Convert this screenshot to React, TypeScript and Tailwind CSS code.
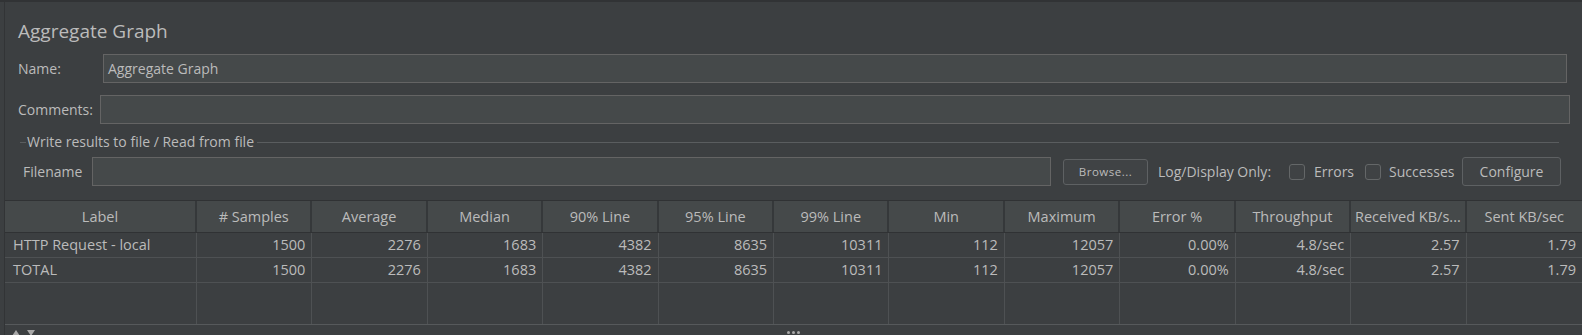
import React from 'react'

const columns = [
  'Label',
  '# Samples',
  'Average',
  'Median',
  '90% Line',
  '95% Line',
  '99% Line',
  'Min',
  'Maximum',
  'Error %',
  'Throughput',
  'Received KB/s...',
  'Sent KB/sec',
]

const rows = [
  ['HTTP Request - local', '1500', '2276', '1683', '4382', '8635', '10311', '112', '12057', '0.00%', '4.8/sec', '2.57', '1.79'],
  ['TOTAL', '1500', '2276', '1683', '4382', '8635', '10311', '112', '12057', '0.00%', '4.8/sec', '2.57', '1.79'],
]

const gridCols = 'grid grid-cols-[192px_repeat(12,minmax(0,1fr))]'

function TextField({ value = '', className = '' }: { value?: string; className?: string }) {
  return (
    <div
      className={`h-[29px] bg-[#45494a] border border-[#646464] flex items-center pl-[4px] text-[14px] text-[#bbbbbb] ${className}`}
    >
      {value}
    </div>
  )
}

function Checkbox() {
  return <div className="w-[16px] h-[16px] rounded-[3px] border border-[#646768] bg-[#3f4244] shrink-0" />
}

export default function App() {
  return (
    <div className="w-[1582px] h-[335px] overflow-hidden bg-[#3c3f41] border-t-[2px] border-[#313335] flex font-['Open_Sans',sans-serif] text-[#bbbbbb]">
      <div className="w-[4px] shrink-0" />
      <div className="flex-1 min-w-0 border-l border-[#323436] flex flex-col">
        {/* Title */}
        <div className="mt-[16px] h-[26px] leading-[26px] pl-[13px] text-[19px]">Aggregate Graph</div>

        {/* Name */}
        <div className="mt-[10px] flex items-center pl-[13px] pr-[15px] text-[14px]">
          <span className="w-[85px] shrink-0">Name:</span>
          <TextField value="Aggregate Graph" className="flex-1" />
        </div>

        {/* Comments */}
        <div className="mt-[12px] flex items-center pl-[13px] pr-[12px] text-[14px]">
          <span className="w-[82px] shrink-0">Comments:</span>
          <TextField className="flex-1" />
        </div>

        {/* Group title */}
        <div className="mt-[8px] h-[20px] flex items-center pl-[15px] pr-[23px] text-[14px]">
          <div className="w-[6px] h-px bg-[#5a5d5f]" />
          <span className="ml-[1px] whitespace-nowrap leading-[20px]">Write results to file / Read from file</span>
          <div className="flex-1 h-px bg-[#5a5d5f] ml-[3px]" />
        </div>

        {/* Filename row */}
        <div className="mt-[5px] h-[29px] flex items-center pl-[18px] text-[14px] whitespace-nowrap">
          <span className="w-[69px] shrink-0">Filename</span>
          <TextField className="w-[959px] shrink-0" />
          <button className="ml-[12px] w-[85px] h-[26px] shrink-0 rounded-[3px] border border-[#5e6163] bg-[#404345] text-[11.5px] tracking-[0.5px] text-[#bbbbbb]">
            Browse...
          </button>
          <span className="ml-[10px] w-[117px] shrink-0">Log/Display Only:</span>
          <div className="ml-[14px]">
            <Checkbox />
          </div>
          <span className="ml-[9px] w-[38px] shrink-0">Errors</span>
          <div className="ml-[13px]">
            <Checkbox />
          </div>
          <span className="ml-[8px] w-[64px] shrink-0">Successes</span>
          <button className="ml-[9px] w-[99px] h-[29px] shrink-0 rounded-[3px] border border-[#5e6163] bg-[#404345] text-[14px] text-[#bbbbbb]">
            Configure
          </button>
        </div>

        {/* Table */}
        <div className="mt-[14px] h-[125px] flex flex-col border-b border-[#56595b] text-[14.5px]">
          <div className={`${gridCols} h-[33px] bg-[#45494a] border-t border-b border-[#303234]`}>
            {columns.map((c, i) => (
              <div
                key={c}
                className={`flex items-center justify-center whitespace-nowrap overflow-hidden ${
                  i < columns.length - 1 ? 'border-r-2 border-[#35383a]' : ''
                }`}
              >
                {c}
              </div>
            ))}
          </div>
          {rows.map((r, ri) => (
            <div key={ri} className={`${gridCols} h-[25px] border-b border-[#4e5153]`}>
              {r.map((v, i) => (
                <div
                  key={i}
                  className={`flex items-center whitespace-nowrap overflow-hidden ${
                    i === 0 ? 'justify-start pl-[8px]' : 'justify-end pr-[6px]'
                  } ${i < r.length - 1 ? 'border-r border-[#4e5153]' : ''}`}
                >
                  {v}
                </div>
              ))}
            </div>
          ))}
          <div className={`${gridCols} flex-1`}>
            {columns.map((c, i) => (
              <div key={c} className={i < columns.length - 1 ? 'border-r border-[#4e5153]' : ''} />
            ))}
          </div>
        </div>

        {/* Bottom splitter strip */}
        <div className="h-[10px] grid grid-cols-[1fr_auto_1fr] items-start">
          <div className="flex gap-[7px] pl-[7px] pt-[5px]">
            <svg width="8" height="6" viewBox="0 0 8 6">
              <path d="M4 0 L8 6 L0 6 Z" fill="#a8a8a8" />
            </svg>
            <svg width="8" height="6" viewBox="0 0 8 6">
              <path d="M0 0 L8 0 L4 6 Z" fill="#a8a8a8" />
            </svg>
          </div>
          <div className="flex gap-[2px] pt-[6px]">
            <div className="w-[3px] h-[3px] rounded-full bg-[#a8a8a8]" />
            <div className="w-[3px] h-[3px] rounded-full bg-[#a8a8a8]" />
            <div className="w-[3px] h-[3px] rounded-full bg-[#a8a8a8]" />
          </div>
          <div />
        </div>
      </div>
    </div>
  )
}
